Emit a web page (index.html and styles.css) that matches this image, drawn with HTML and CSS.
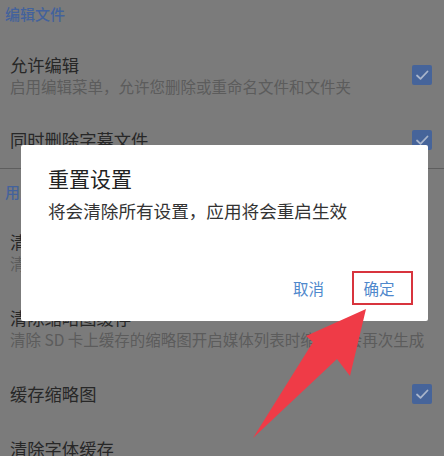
FILE: index.html
```html
<!DOCTYPE html>
<html lang="zh-CN">
<head>
    <meta charset="UTF-8">
    <meta name="viewport" content="width=device-width, initial-scale=1.0">
    <title>设置</title>
    <link rel="stylesheet" href="styles.css">
</head>
<body>
    <div class="screen">
        <div class="section">
            <div class="section-title">编辑文件</div>
            <div class="item">
                <div class="item-text">
                    <div class="item-title">允许编辑</div>
                    <div class="item-sub">启用编辑菜单，允许您删除或重命名文件和文件夹</div>
                </div>
                <span class="check"><svg viewBox="0 0 20 20"><path d="M5 10.5l3.5 3.3L15.5 6.5"/></svg></span>
            </div>
            <div class="item single">
                <div class="item-text">
                    <div class="item-title">同时删除字幕文件</div>
                </div>
                <span class="check"><svg viewBox="0 0 20 20"><path d="M5 10.5l3.5 3.3L15.5 6.5"/></svg></span>
            </div>
        </div>

        <div class="section divided">
            <div class="section-title">用户界面</div>
            <div class="item">
                <div class="item-text">
                    <div class="item-title">清除播放记录</div>
                    <div class="item-sub">清除所有媒体的播放记录</div>
                </div>
            </div>
            <div class="item">
                <div class="item-text">
                    <div class="item-title">清除缩略图缓存</div>
                    <div class="item-sub">清除 SD 卡上缓存的缩略图开启媒体列表时缩略图会再次生成</div>
                </div>
            </div>
            <div class="item single">
                <div class="item-text">
                    <div class="item-title">缓存缩略图</div>
                </div>
                <span class="check"><svg viewBox="0 0 20 20"><path d="M5 10.5l3.5 3.3L15.5 6.5"/></svg></span>
            </div>
            <div class="item">
                <div class="item-text">
                    <div class="item-title">清除字体缓存</div>
                    <div class="item-sub">清除已缓存的字体文件</div>
                </div>
            </div>
        </div>
    </div>

    <div class="dialog">
        <div class="dialog-title">重置设置</div>
        <div class="dialog-body">将会清除所有设置，应用将会重启生效</div>
        <div class="dialog-actions">
            <button class="btn" type="button">取消</button>
            <button class="btn marked" type="button">确定</button>
        </div>
    </div>

    <svg class="arrow" viewBox="0 0 444 456" width="444" height="456">
        <polygon points="366,309 350,376 337,359 253,438 313,342 306,336"/>
    </svg>
</body>
</html>
```

FILE: styles.css
```css
body {
    margin: 0;
    width: 444px;
    height: 456px;
    overflow: hidden;
    background: #7b7b7b;
    font-family: 'Noto Sans CJK SC', 'Noto Sans', sans-serif;
    position: relative;
}

.screen {
    margin-top: -9px;
}

.divided {
    border-top: 1px solid #5e5e5e;
}

.section-title {
    padding: 12px 0 11.5px 5px;
    font-size: 15px;
    line-height: 22px;
    color: #43629c;
    font-weight: 500;
}

.item {
    display: flex;
    align-items: center;
    padding: 17px 12px 17px 10px;
}

.item.single {
    padding-top: 16.5px;
    padding-bottom: 16.5px;
}

.item-text {
    flex: 1;
    min-width: 0;
    white-space: nowrap;
}

.item-title {
    font-size: 17.3px;
    line-height: 22px;
    color: #272727;
}

.item-sub {
    font-size: 15.5px;
    line-height: 20px;
    color: #5c5c5c;
}

.check {
    width: 20px;
    height: 20px;
    flex-shrink: 0;
    border-radius: 2px;
    background: #46649a;
    display: flex;
}

.check svg {
    width: 20px;
    height: 20px;
    fill: none;
    stroke: #a9b5cb;
    stroke-width: 1.8;
    stroke-linecap: round;
    stroke-linejoin: round;
}

.dialog {
    position: absolute;
    left: 21px;
    top: 145px;
    width: 407px;
    height: 176px;
    box-sizing: border-box;
    background: #fff;
    border-radius: 2px;
    padding: 19px 15px 16px 27px;
    display: flex;
    flex-direction: column;
}

.dialog-title {
    font-size: 21px;
    line-height: 28px;
    color: #222;
}

.dialog-body {
    margin-top: 6px;
    font-size: 17.6px;
    line-height: 26px;
    color: #333;
}

.dialog-actions {
    margin-top: auto;
    display: flex;
    justify-content: flex-end;
    gap: 13px;
}

.btn {
    width: 61px;
    height: 34px;
    padding: 0;
    border: 2px solid transparent;
    background: none;
    font-family: inherit;
    font-size: 15.5px;
    color: #4f88cc;
}

.btn.marked {
    border-color: #d8343d;
    padding-right: 7px;
}

.arrow {
    position: absolute;
    left: 0;
    top: 0;
}

.arrow polygon {
    fill: #ef3b47;
}
```
